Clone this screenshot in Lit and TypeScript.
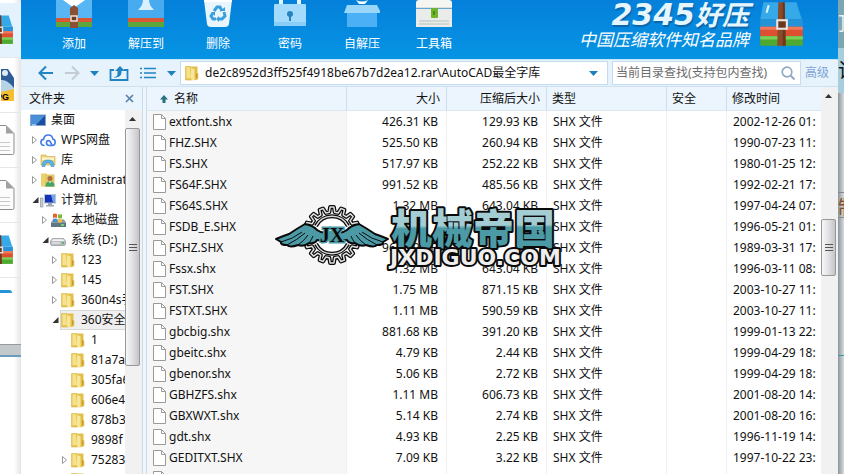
import { LitElement, html, svg, css, nothing } from "lit";
import { customElement } from "lit/decorators.js";
import { classMap } from "lit/directives/class-map.js";

type Row = [string, string, string, string];
type Node = { level: number; icon: string; label: string; open?: boolean; closed?: boolean; selected?: boolean };

const ROWS: Row[] = [
  ["extfont.shx", "426.31 KB", "129.93 KB", "2002-12-26 01:"],
  ["FHZ.SHX", "525.50 KB", "260.94 KB", "1990-07-23 11:"],
  ["FS.SHX", "517.97 KB", "252.22 KB", "1980-01-25 12:"],
  ["FS64F.SHX", "991.52 KB", "485.56 KB", "1992-02-21 17:"],
  ["FS64S.SHX", "1.32 MB", "643.04 KB", "1997-04-24 07:"],
  ["FSDB_E.SHX", "", "", "1996-05-21 01:"],
  ["FSHZ.SHX", "967.10 KB", "", "1989-03-31 17:"],
  ["Fssx.shx", "1.32 MB", "643.04 KB", "1996-03-11 08:"],
  ["FST.SHX", "1.75 MB", "871.15 KB", "2003-10-27 11:"],
  ["FSTXT.SHX", "1.11 MB", "590.59 KB", "2003-10-27 11:"],
  ["gbcbig.shx", "881.68 KB", "391.20 KB", "1999-01-13 22:"],
  ["gbeitc.shx", "4.79 KB", "2.44 KB", "1999-04-29 18:"],
  ["gbenor.shx", "5.06 KB", "2.72 KB", "1999-04-29 18:"],
  ["GBHZFS.shx", "1.11 MB", "606.73 KB", "2001-08-20 14:"],
  ["GBXWXT.shx", "5.14 KB", "2.74 KB", "2001-08-20 16:"],
  ["gdt.shx", "4.93 KB", "2.25 KB", "1996-11-19 14:"],
  ["GEDITXT.SHX", "7.09 KB", "3.22 KB", "1997-10-22 23:"],
  ["", "", "", ""],
];

const NODES: Node[] = [
  { level: 0, icon: "desktop", label: "桌面" },
  { level: 1, icon: "cloud", label: "WPS网盘", closed: true },
  { level: 1, icon: "library", label: "库", closed: true },
  { level: 1, icon: "user", label: "Administrator", closed: true },
  { level: 1, icon: "computer", label: "计算机", open: true },
  { level: 2, icon: "disk", label: "本地磁盘", closed: true },
  { level: 2, icon: "drive", label: "系统 (D:)", open: true },
  { level: 3, icon: "folder", label: "123", closed: true },
  { level: 3, icon: "folder", label: "145", closed: true },
  { level: 3, icon: "folder", label: "360n4s手", closed: true },
  { level: 3, icon: "folder", label: "360安全", open: true, selected: true },
  { level: 4, icon: "folder", label: "1" },
  { level: 4, icon: "folder", label: "81a7a" },
  { level: 4, icon: "folder", label: "305fa6" },
  { level: 4, icon: "folder", label: "606e4" },
  { level: 4, icon: "folder", label: "878b3" },
  { level: 4, icon: "folder", label: "9898f" },
  { level: 4, icon: "folder", label: "75283", closed: true },
  { level: 4, icon: "folder", label: "" },
];

const ICONS: Record<string, unknown> = {
  folder: svg`
    <path d="M1.500 1.500h5.500l1 1V15H1.500z" fill="#e6c653" stroke="#d6b548" stroke-width=".6"/>
    <path d="M7.500 1.500h6V8l.8.5V14l-2 1H7.500z" fill="#e3bf4a"/>
    <path d="M2.500 2.200h3.200l1.300 10.800H2.500z" fill="#f5e28c"/>
    <path d="M7 3l3.500 1.200V16L7 14.200z" fill="#f7e69a"/>
    <path d="M12.700 8.500v4.500" stroke="#b98f22"/>`,
  desktop: svg`<rect x=".5" y="3" width="15" height="10.5" fill="#1a4f9c" stroke="#7fa5cf"/>
    <path d="M1 3.5h14L6 13H1z" fill="#4a8fda"/><path d="M2 13h4" stroke="#d8ecff"/>`,
  cloud: svg`<path d="M4.500 13.500C1.800 13.500.9 11.700.9 10.400c0-1.700 1.200-2.900 2.700-3C4 4.500 5.800 3 8.200 3c2.600 0 4.300 1.700 4.600 4 1.500.3 2.400 1.500 2.400 3.100 0 2-1.300 3.400-3.200 3.400H9.600c-2 0-3.200-1.300-3.200-2.700 0-1.300.9-2.200 2.100-2.200 1.500 0 2.200 1.200 3.500 4.900" fill="none" stroke="#3e7bea" stroke-width="1.600"/>`,
  library: svg`<path d="M1 3h5l1 1.500h8V13H1z" fill="#efd37a" stroke="#c9a548" stroke-width=".6"/>
    <path d="M2 5.500h12V8H2z" fill="#fbf3c8"/>
    <path d="M2 14.500c0-5 2-6.500 6-6.500s6 1.500 6 6.500h-3c0-2.500-.8-3.600-3-3.600s-3 1.100-3 3.600z" fill="#58b4e8" stroke="#3584bd" stroke-width=".5"/>`,
  user: svg`<path d="M1 1.500h6v13H1z" fill="#ecd06c"/><path d="M5 2.500h9.500V15H5z" fill="#e5c765"/>
    <circle cx="10" cy="6.500" r="2.500" fill="#b0703c"/><path d="M5.500 14.500c0-4 2-5 4.500-5s4.500 1 4.500 5z" fill="#3fa66a"/><path d="M9 9.500l1 2 1-2z" fill="#fff"/>`,
  computer: svg`<rect x=".3" y="6" width="2.700" height="9" fill="#c4cbd3" stroke="#8b949e" stroke-width=".6"/>
    <rect x="4.500" y="2.500" width="11" height="8.500" fill="#1431b8" stroke="#b9c4d0"/>
    <path d="M11 3h4v7.500h-2z" fill="#6fa4f0"/><path d="M8 11h4v2h2v1.500H6V13h2z" fill="#9ba7b4"/>`,
  disk: svg`<path d="M1 10.500l2-3h11l2 3v4H1z" fill="#8b99a3"/><path d="M1 11h15v4H1z" fill="#5e7782"/>
    <path d="M3 2q2-1 4 0v4Q5 5 3 6z" fill="#e9622e"/><path d="M8 2q2 1 4 0v4q-2 1-4 0z" fill="#7fb93c"/>
    <path d="M3 7q2-1 4 0v3q-2-1-4 0z" fill="#3a8edb"/><path d="M8 7q2 1 4 0v3q-2 1-4 0z" fill="#f7bf30"/><path d="M11 13h3" stroke="#7dea74" stroke-width="1.500"/>`,
  drive: svg`<path d="M.5 9l2-2.500h11l2 2.500v3.500l-1 1h-13l-1-1z" fill="#b9bdc1" stroke="#85898d" stroke-width=".6"/>
    <path d="M1.500 9l1.500-1.800h10L14.500 9z" fill="#f2f3f4"/><path d="M2 11h8" stroke="#f5f5f5"/><path d="M12 11h2" stroke="#3fb748" stroke-width="1.500"/>`,
};

const archive = svg`
  <path d="M6 1h31l5 16H3z" fill="#36a9e8"/><path d="M3 17h40v7H3z" fill="#2593d8"/>
  <path d="M3 24h40v9H3z" fill="#dd4f30"/><path d="M3 24h40v3H3z" fill="#f1785a"/>
  <path d="M3 33h40v9H3z" fill="#4fa92f"/><path d="M3 33h40v3H3z" fill="#7cd054"/>
  <path d="M20 1h6l1 41h-8z" fill="#8a4b29"/><path d="M24 1h2l1 41h-3z" fill="#6e371c"/>
  <rect x="19" y="18" width="9" height="8" fill="#6e371c" stroke="#e8e4df" stroke-width="2"/>
  <path d="M11 4l-2 7" stroke="#dff4ff" stroke-width="2"/>`;

const TOOLS: [string, unknown][] = [
  ["添加", svg`<path d="M0 0h36v18H0z" fill="#58b6f4"/><path d="M7 0h22L18 8z" fill="#fff"/>
    <path d="M0 18h36v4H0z" fill="#d95734"/><path d="M0 22h36v5H0z" fill="#5da63b"/>
    <path d="M14 8l4-3 4 3v20h-8z" fill="#8b5033"/><rect x="15" y="16" width="6" height="5" fill="#6b3b26" stroke="#efe2d8" stroke-width="1.500"/>`],
  ["解压到", svg`<path d="M0 0h36v18H0z" fill="#49abef"/><path d="M15 0h6c0 4 2 7 5 10H10c3-3 5-6 5-10z" fill="#d9f1ff"/>
    <path d="M0 18h36v4H0z" fill="#d95734"/><path d="M0 22h36v5H0z" fill="#5da63b"/>`],
  ["删除", svg`<path d="M4 0h28l-3 24q-.5 3-4 3H11q-3.500 0-4-3z" fill="#e9f5fc"/><path d="M4 0h28v2H4z" fill="#fff"/>
    <g fill="none" stroke="#3aa0dd" stroke-width="3"><path d="M14 11l3-4h3l2 4"/><path d="M24 12l1 4-3 3h-3"/><path d="M16 19h-3l-2-3 2-3"/></g>
    <path d="M20 11h5V7zM19 16v6l-3-3zM11 12l4 0 0 4z" fill="#3aa0dd"/>`],
  ["密码", svg`<path d="M7 7V0h4v7zM25 7V0h4v7z" fill="#e4f4fd"/><rect x="2" y="4" width="32" height="22" rx="1" fill="#a4dafb"/>
    <path d="M2 22h32v4H2z" fill="#8acdf6"/><circle cx="18" cy="14" r="3" fill="#2783bf"/><path d="M17 14h2v7h-2z" fill="#2783bf"/>`],
  ["自解压", svg`<path d="M3 13h30v14H3z" fill="#4bb0f6"/><path d="M0 13l3-8h30l4 8z" fill="#9ad5fa"/><path d="M12 0q6 3 12 0l-3 4h-6z" fill="#fff"/>`],
  ["工具箱", svg`<path d="M0 8V3q0-3 3-3h30q3 0 3 3v5z" fill="#f5f6f2"/><path d="M0 9h36v18H0z" fill="#e9ece8"/><path d="M0 8h36" stroke="#c7cdc9"/>
    <path d="M3 21h30M3 24h30" stroke="#b8c3c3"/><rect x="15" y="8" width="7" height="10" rx="1" fill="#6fb52c"/><path d="M18 11v4" stroke="#3f7d16" stroke-width="1.500"/>`],
];

const wing = svg`
  <path d="M-56 4Q-49 1-43-1Q-34-7-27-11Q-18-9-15-5Q-11-2-6-2V7Q-11 5-15 5Q-17 9-23 8Q-28 12-34 10Q-42 13-45 10Q-52 10-51 7Z" fill="#4b9aa6" stroke="#0a0a0a" stroke-width="2" stroke-linejoin="round"/>
  <path d="M-51 7Q-39 4-30-3M-45 10Q-35 5-27-2M-34 10Q-28 6-24 0M-23 8Q-20 4-19 1" fill="none" stroke="#0a0a0a"/>`;

const gearPath = (() => {
  const teeth = 16;
  const pts: string[] = [];
  for (let i = 0; i < teeth; i++) {
    for (const [off, r] of [[-0.3, 23], [-0.17, 28], [0.17, 28], [0.3, 23]]) {
      const a = ((i + off) * 2 * Math.PI) / teeth;
      pts.push(`${(r * Math.cos(a)).toFixed(1)} ${(r * Math.sin(a)).toFixed(1)}`);
    }
  }
  return `M${pts.join("L")}Z`;
})();

@customElement("app-root")
export class AppRoot extends LitElement {
  static styles = css`
    :host {
      display: grid;
      grid-template-columns: 21px minmax(0, 1fr) 6px;
      height: 100vh;
      overflow: hidden;
      font: 12px/20px "Noto Sans", "Noto Sans CJK SC", sans-serif;
      color: #111;
      background: #fff;
    }
    * { box-sizing: border-box; }
    svg { display: block; flex: none; }
    button { font: inherit; border: 0; padding: 0; background: none; color: inherit; cursor: pointer; }

    .behind { overflow: hidden; background: linear-gradient(90deg, #fff 14px, #e4e4e4); display: flex; flex-direction: column; padding-top: 3px; }
    .thumb { height: 55px; flex: none; border-bottom: 1px solid #e4e8eb; display: flex; align-items: center; justify-content: flex-end; padding-right: 6px; }
    .thumb.hot { background: #e3f2fc; }
    .tip { height: 67px; flex: none; padding-top: 12px; border-bottom: 1px solid #999; }
    .tip i { display: block; width: 12px; height: 3px; background: #2593d8; border-radius: 0 3px 0 0; }
    .status { height: 12px; flex: none; background: #c3c8cb; border-bottom: 2px solid #6b9bbd; }
    .pg { font: bold 9px "Liberation Sans", sans-serif; }

    .window { display: flex; flex-direction: column; min-height: 0; background: #fff; }
    header { height: 59px; flex: none; background: linear-gradient(#0580da, #0694e4); display: flex; justify-content: space-between; color: #fff; }
    .tools { display: flex; padding-left: 17px; }
    .tool { width: 72px; display: flex; flex-direction: column; align-items: center; gap: 5px; }
    .brand { display: flex; gap: 8px; padding-right: 32px; }
    .brandtext { text-align: right; }
    .slogan { font: italic 17px/20px "Noto Sans CJK SC", sans-serif; margin: 0; }
    .name { margin: 0; height: 29px; display: flex; justify-content: flex-end; color: #e6f6ff; text-shadow: 1px 2px 1px #0b66ab; }
    .digits { font: italic bold 30px/30px "DejaVu Sans", sans-serif; }
    .hanzi { font: italic bold 27px/28px "Noto Sans CJK SC", sans-serif; }

    .bar { height: 28px; flex: none; display: flex; align-items: center; background: #e6f3fd; border-top: 1px solid #c8e6f8; border-bottom: 1px solid #cfe0ee; padding: 0 9px 0 17px; gap: 4px; }
    .nav { display: flex; align-items: center; justify-content: space-between; width: 138px; flex: none; }
    .field { display: flex; align-items: center; height: 24px; background: #fff; border: 1px solid #c5dcee; }
    .address { flex: 1; min-width: 0; padding: 0 9px 0 3px; gap: 5px; }
    .search { width: 189px; padding: 0 4px 0 3px; }
    input { border: 0; outline: 0; padding: 0; background: none; font: inherit; color: #111; min-width: 0; flex: 1; height: 20px; }
    input::placeholder { color: #6b6b6b; opacity: 1; }
    a { color: #7fa3d3; text-decoration: none; }

    main { flex: 1; min-height: 0; display: grid; grid-template-columns: 121px 5px minmax(0, 1fr) 17px; }
    .side { display: flex; flex-direction: column; min-height: 0; min-width: 0; }
    .sidehead { height: 23px; flex: none; background: #e9f4fd; display: flex; align-items: center; justify-content: space-between; padding: 0 8px; }
    .sidebody { display: grid; grid-template-columns: minmax(0, 1fr) 17px; flex: 1; min-height: 0; }
    ul { list-style: none; margin: 0; padding: 0; overflow: hidden; }
    li { height: 20px; display: flex; align-items: center; white-space: nowrap; }
    .twist { width: 9px; flex: none; }
    .lv1 { padding-left: 10px; }
    .lv2 { padding-left: 20px; }
    .lv3 { padding-left: 30px; }
    .lv4 { padding-left: 40px; }
    .item { display: flex; align-items: center; gap: 5px; flex: 1; height: 20px; }
    .selected { background: #efefef; box-shadow: inset 1px 1px #d9d9d9, inset 0 -1px #d9d9d9; }
    .splitter { background: #eef6fd; border: solid #c9dcec; border-width: 0 1px; }

    .scroll { background: #f1f1f1; display: flex; flex-direction: column; align-items: center; min-height: 0; padding-right: 2px; }
    .up { height: 18px; display: grid; place-items: center; flex: none; }
    .thumbbar { width: 15px; border: 1px solid #979797; border-radius: 2px; background: linear-gradient(90deg, #f8f8f8, #dcdcdf 60%, #c4c4c9); display: grid; place-items: center; flex: none; }
    .long { height: 238px; }
    .short { height: 57px; margin-top: 114px; }

    .list { position: relative; overflow: hidden; min-height: 0; }
    table { table-layout: fixed; border-collapse: separate; border-spacing: 0; width: 100%; }
    th { height: 24px; padding: 0 6px 0 5px; font-weight: normal; text-align: left; background: #ecf5fd; border-right: 1px solid #cddfee; border-bottom: 1px solid #dbe7f1; line-height: 22px; white-space: nowrap; }
    td { height: 21px; line-height: 21px; padding: 0 8px 0 6px; white-space: nowrap; overflow: hidden; border-right: 1px solid #f0f0f0; }
    th:last-child, td:last-child { border-right: 0; padding-right: 0; }
    .num { text-align: right; }
    .c-name { width: 200px; }
    .c-num { width: 100px; }
    .c-type { width: 120px; }
    .c-safe { width: 60px; }
    .namecell { background: #f6f6f6; }
    .cell { display: flex; align-items: center; gap: 3px; }
    .heading { display: flex; align-items: center; gap: 6px; padding-left: 8px; }
    .mark { position: absolute; left: 128px; top: 113px; }
    .cn { font: 900 41px "Noto Sans CJK SC", sans-serif; }
    .en { font: bold 22px "DejaVu Sans", sans-serif; }
    .jx { font: bold 20px "Liberation Serif", serif; }

    .edge { background: linear-gradient(90deg, #8b9599, #d7dcde); display: flex; flex-direction: column; overflow: hidden; }
    .edge div { flex: none; overflow: hidden; font-size: 20px; line-height: 30px; white-space: nowrap; }
    .e1 { height: 48px; padding-top: 9px; background: #7da6b5; color: #e7f0f3; }
    .e2 { height: 45px; padding-top: 8px; background: #a8cedd; }
    .e3 { height: 99px; }
    .e4 { height: 26px; border: solid #888; border-width: 1px 0; color: #8a4b29; }
    .e5 { height: 138px; border-bottom: 1px solid #3b94a8; }
  `;

  private icon(name: string) {
    return html`<svg width="16" height="16" viewBox="0 0 16 16" aria-hidden="true">${ICONS[name]}</svg>`;
  }

  private caret() {
    return html`<svg width="9" height="5" viewBox="0 0 9 5" aria-hidden="true"><path d="M0 0h9L4.500 5z" fill="#1e80bf"/></svg>`;
  }

  private box(size: number) {
    return html`<svg width=${size} height=${size} viewBox="0 0 46 44" aria-hidden="true">${archive}</svg>`;
  }

  private sheet() {
    return html`<svg width="21" height="32" viewBox="0 0 21 32" aria-hidden="true">
      <path d="M0 1.500h12l8 8V29q0 1.500-1.500 1.500H0" fill="#fcfcfc" stroke="#8d8d8d"/><path d="M12 1.500v8h8z" fill="#a1a1a1"/>
      <path d="M0 18.500h16M0 22.500h16M0 26.500h16" stroke="#c9c9c9"/></svg>`;
  }

  private behind() {
    return html`<div class="behind">
      <div class="thumb hot">${this.box(32)}</div>
      <div class="thumb"><svg width="14" height="36" viewBox="0 0 14 36" aria-hidden="true">
        <path d="M0 2h7l6 9v14H0z" fill="#2c5d97"/><path d="M0 13q6-1 13 8v4H0z" fill="#b7d3e6"/><circle cx="4" cy="6" r="3" fill="#dfe9f2"/>
        <path d="M0 25l13-3v12H0z" fill="#f5bd2f"/><text class="pg" x="-5" y="33">PG</text></svg></div>
      <div class="thumb">${this.sheet()}</div>
      <div class="thumb">${this.sheet()}</div>
      <div class="thumb">${this.box(32)}</div>
      <div class="tip"><i></i></div>
      <div class="status"></div>
    </div>`;
  }

  private topBar() {
    return html`<header>
      <div class="tools">${TOOLS.map(([label, art]) => html`<button class="tool">
        <svg width="36" height="29" viewBox="0 0 36 29" aria-hidden="true">${art}</svg><span>${label}</span></button>`)}</div>
      <div class="brand">
        <div class="brandtext">
          <p class="name"><span class="digits">2345</span><span class="hanzi">好压</span></p>
          <p class="slogan">中国压缩软件知名品牌</p>
        </div>
        ${this.box(49)}
      </div>
    </header>`;
  }

  private navBar() {
    return html`<div class="bar">
      <div class="nav">
        <button aria-label="后退"><svg width="16" height="16" viewBox="0 0 16 16"><path d="M15 8H2M8 1.500L1.500 8 8 14.500" fill="none" stroke="#2384c2" stroke-width="2"/></svg></button>
        <button aria-label="前进"><svg width="16" height="16" viewBox="0 0 16 16"><path d="M1 8h13M8 1.500L14.500 8 8 14.500" fill="none" stroke="#c3ccd3" stroke-width="2"/></svg></button>
        <button aria-label="历史">${this.caret()}</button>
        <button aria-label="上一级"><svg width="20" height="16" viewBox="0 0 20 16"><path d="M5 5H1.500v10h17V5H15" fill="none" stroke="#2384c2" stroke-width="1.800"/><path d="M5 12c4 0 3.500-3 3.500-6H6l5-5 5 5h-3.500c0 4-1 6.500-7.500 6.500z" fill="#2384c2"/></svg></button>
        <button aria-label="视图"><svg width="18" height="12" viewBox="0 0 18 12"><path d="M5 1.500h12M5 6h12M5 10.500h12M1 1.500h2M1 6h2M1 10.500h2" stroke="#2384c2" stroke-width="1.600"/></svg></button>
        <button aria-label="视图选项">${this.caret()}</button>
      </div>
      <div class="field address">${this.icon("folder")}
        <input aria-label="路径" .value=${"de2c8952d3ff525f4918be67b7d2ea12.rar\\AutoCAD最全字库"} />
        <button aria-label="展开路径">${this.caret()}</button>
      </div>
      <div class="field search"><input aria-label="查找" placeholder="当前目录查找(支持包内查找)" />
        <button aria-label="搜索"><svg width="16" height="16" viewBox="0 0 16 16"><circle cx="7" cy="7" r="4.800" fill="none" stroke="#92a9c4" stroke-width="1.700"/><path d="M10.500 10.500l4 4" stroke="#92a9c4" stroke-width="2"/></svg></button>
      </div>
      <a href="#advanced">高级</a>
    </div>`;
  }

  private scroll(size: string) {
    return html`<div class="scroll">
      <div class="up"><svg width="7" height="4" viewBox="0 0 7 4"><path d="M0 4h7L3.500 0z" fill="#333"/></svg></div>
      <div class="thumbbar ${size}"><svg width="8" height="9" viewBox="0 0 8 9"><path d="M0 1.500h8M0 4.500h8M0 7.500h8" stroke="#555"/></svg></div>
    </div>`;
  }

  private node(n: Node) {
    const arrow = n.open
      ? html`<svg width="8" height="8" viewBox="0 0 8 8"><path d="M7.500 1v6h-6z" fill="#333"/></svg>`
      : n.closed
        ? html`<svg width="7" height="10" viewBox="0 0 7 10"><path d="M1.500 1.500L5.500 5l-4 3.500z" fill="#fff" stroke="#999"/></svg>`
        : nothing;
    return html`<li class="lv${n.level}"><span class="twist">${arrow}</span>
      <span class=${classMap({ item: true, selected: !!n.selected })}>${this.icon(n.icon)}<span>${n.label}</span></span></li>`;
  }

  private side() {
    return html`<section class="side">
      <div class="sidehead"><span>文件夹</span>
        <button aria-label="关闭"><svg width="9" height="9" viewBox="0 0 9 9"><path d="M1 1l7 7M8 1L1 8" stroke="#5b82ad" stroke-width="1.700"/></svg></button></div>
      <div class="sidebody"><ul>${NODES.map((n) => this.node(n))}</ul>${this.scroll("long")}</div>
    </section>`;
  }

  private files() {
    return html`<div class="list">
      <table>
        <thead><tr>
          <th class="c-name"><span class="heading"><svg width="8" height="8" viewBox="0 0 8 8"><path d="M0 4.500L4 0l4 4.500H5.500V8h-3V4.500z" fill="#28717f"/></svg>名称</span></th>
          <th class="c-num num">大小</th><th class="c-num num">压缩后大小</th><th class="c-type">类型</th><th class="c-safe">安全</th><th>修改时间</th>
        </tr></thead>
        <tbody>${ROWS.map(([name, size, packed, date]) => html`<tr>
          <td class="namecell"><span class="cell"><svg width="13" height="16" viewBox="0 0 13 16"><path d="M.5.5h8l4 4v11H.5z" fill="#fff" stroke="#9a9a9a"/><path d="M8.500.5v4h4" fill="none" stroke="#9a9a9a"/></svg>${name}</span></td>
          <td class="num">${size}</td><td class="num">${packed}</td><td>${date ? "SHX 文件" : nothing}</td><td></td><td>${date}</td></tr>`)}</tbody>
      </table>
      <svg class="mark" width="296" height="72" viewBox="0 0 296 72" aria-hidden="true">
        <defs><linearGradient id="teal" x1="0" y1="0" x2=".03" y2="1">
          <stop offset=".5" stop-color="#a4cdd3"/><stop offset=".55" stop-color="#4b9aa6"/></linearGradient></defs>
        <g transform="translate(57 35)">
          <circle r="20" fill="#fff"/>
          <path d=${gearPath} fill="none" stroke="#0a0a0a" stroke-width="4" stroke-linejoin="round"/>
          <path d=${gearPath} fill="none" stroke="#e0e0e0" stroke-width="1.500" stroke-linejoin="round"/>
          <path d="M-16-9A18 18 0 0 1 16-9M-16 9A18 18 0 0 0 16 9" fill="none" stroke="#0a0a0a" stroke-width="4"/>
          <path d="M-16-9A18 18 0 0 1 16-9M-16 9A18 18 0 0 0 16 9" fill="none" stroke="#d8d8d8" stroke-width="1.500"/>
          ${wing}<g transform="scale(-1 1)">${wing}</g>
          <path d="M-9-4H9V6H-9z" fill="#4b9aa6"/>
          <text class="jx" text-anchor="middle" y="7" fill="#0a0a0a" stroke="#4b9aa6" stroke-width="3" paint-order="stroke">JX</text>
        </g>
        <text class="cn" x="116" y="44" fill="url(#teal)" stroke="#0a0a0a" stroke-width="4" stroke-linejoin="round" paint-order="stroke">机械帝国</text>
        <text class="en" x="115" y="65" fill="#eee" stroke="#0a0a0a" stroke-width="4" stroke-linejoin="round" paint-order="stroke">JXDIGUO.COM</text>
      </svg>
    </div>`;
  }

  render() {
    return html`${this.behind()}
      <div class="window">${this.topBar()}${this.navBar()}
        <main>${this.side()}<div class="splitter"></div>${this.files()}${this.scroll("short")}</main>
      </div>
      <div class="edge"><div class="e1">顶</div><div class="e2">论</div><div class="e3"></div><div class="e4">制</div><div class="e5"></div></div>`;
  }
}
